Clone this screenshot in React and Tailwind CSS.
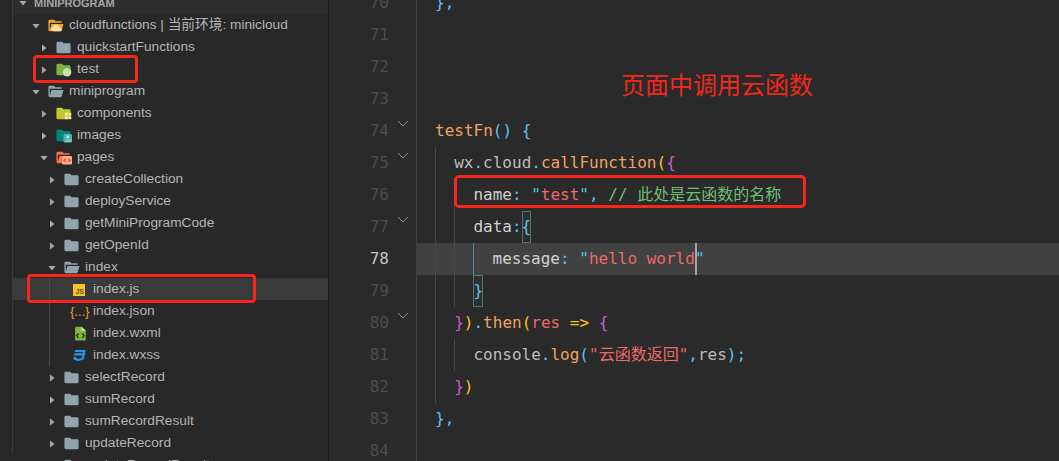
import React from "react";

const FOLDER = "M10 4H4c-1.11 0-2 .89-2 2v12c0 1.097.903 2 2 2h16c1.097 0 2-.903 2-2V8a2 2 0 0 0-2-2h-8l-2-2z";
const FOLDER_OPEN = "M19 20H4c-1.11 0-2-.9-2-2V6c0-1.11.89-2 2-2h6l2 2h7a2 2 0 0 1 2 2H4v10l2.14-8h17.07l-2.28 8.5c-.23.87-1.01 1.5-1.93 1.5z";

function Arrow({ open }) {
  return (
    <svg width="8" height="8" viewBox="0 0 8 8" className="shrink-0 mr-2 text-[#a8a8a8]">
      {open ? <path d="M0.5 2h7L4 6.5z" fill="currentColor" /> : <path d="M2 0.5v7L6.5 4z" fill="currentColor" />}
    </svg>
  );
}

// overlay badge on top of the material folder icons
function Badge({ kind }) {
  if (kind === "cloud") return <path d="M10 20c-2.5 0-4-1.4-4-3.2 0-1.6 1.2-2.8 2.8-3 .7-1.7 2.3-2.8 4.2-2.8 2.3 0 4.2 1.6 4.6 3.7 2 .2 3.4 1.5 3.4 3 0 1.3-1 2.3-2.5 2.3z" fill="#ffe0a8" />;
  if (kind === "test") return <circle cx="17" cy="16" r="6" fill="#c5e1a5" />;
  if (kind === "grid")
    return (
      <g fill="#eef09a">
        <rect x="14" y="11" width="4" height="4" />
        <rect x="19" y="11" width="4" height="4" />
        <rect x="14" y="16" width="4" height="4" />
        <rect x="19" y="16" width="4" height="4" />
      </g>
    );
  if (kind === "image")
    return (
      <g>
        <rect x="12" y="10" width="12" height="12" rx="2" fill="#4db6ac" />
        <circle cx="18" cy="14" r="2" fill="#d7f0ec" />
        <path d="M13 21l4-4 3 2 3-3v5z" fill="#80cbc4" />
      </g>
    );
  if (kind === "code")
    return (
      <g>
        <rect x="10" y="10" width="14" height="12" rx="2" fill="#ffab91" />
        <path d="M15 13.5L12.5 16l2.5 2.5M19 13.5l2.5 2.5-2.5 2.5" stroke="#d84315" strokeWidth="1.5" fill="none" />
      </g>
    );
  return null;
}

function FolderIcon({ color, open, badge }) {
  return (
    <svg width="17" height="17" viewBox="0 0 24 24" className="shrink-0 mr-[5px] -ml-[1px]">
      <path d={open ? FOLDER_OPEN : FOLDER} fill={color} />
      <Badge kind={badge} />
    </svg>
  );
}

function FileIcon({ kind }) {
  if (kind === "js") {
    return (
      <span className="shrink-0 mr-[8px] ml-[1px] w-3 h-3 bg-[#fbc02d] flex items-end justify-end pr-[1px] text-[7px] leading-[8px] font-bold text-[#6b4d00]">
        JS
      </span>
    );
  }
  if (kind === "json") {
    return <span className="shrink-0 w-[15px] mr-[6px] flex justify-center text-[12px] leading-none tracking-[-0.5px] text-[#f9a825]">{"{…}"}</span>;
  }
  if (kind === "wxml") {
    return (
      <svg width="15" height="15" viewBox="0 0 24 24" className="shrink-0 mr-[6px]">
        <path d="M7 1h9l6 6v14a2 2 0 0 1-2 2H7a2 2 0 0 1-2-2V3a2 2 0 0 1 2-2z" fill="#7cb342" />
        <path d="M15 1v7h7z" fill="#c5e1a5" />
        <path d="M10.5 12L7.5 15.5l3 3.5M16.5 12l3 3.5-3 3.5" stroke="#1f2a12" strokeWidth="2" fill="none" />
      </svg>
    );
  }
  return (
    <svg width="15" height="15" viewBox="0 0 24 24" className="shrink-0 mr-[6px]">
      <path d="M5 3l-.65 3.34h13.59L17.5 8.5H3.92l-.66 3.33h13.59l-.76 3.81-5.48 1.81-4.75-1.81.33-1.64H2.85l-.79 4 7.85 3 9.05-3 1.2-6.03.24-1.21L21.94 3H5z" fill="#2196f3" />
    </svg>
  );
}

const PAD = { 1: "pl-[19px]", 2: "pl-[27px]", 3: "pl-[35px]", 4: "pl-[43px]" };

function Row({ depth, name, arrow, color = "#90a4ae", open, badge, file, active, children }) {
  return (
    <div className={"relative flex items-center h-[22px] pt-px whitespace-nowrap text-[13.7px] text-[#b4b4b4] " + PAD[depth] + (active ? " bg-[#3a3a3a]" : "")}>
      {arrow ? <Arrow open={arrow === "open"} /> : <span className="w-2 mr-2 shrink-0" />}
      {file ? <FileIcon kind={file} /> : <FolderIcon color={color} open={open} badge={badge} />}
      <span>{name}</span>
      {children}
    </div>
  );
}

function Sidebar() {
  const folder = (name) => <Row key={name} depth={3} name={name} arrow="closed" />;
  return (
    <div className="w-[329px] h-full shrink-0 overflow-hidden pl-3 bg-[#282828] border-r border-[#1f1f1f]">
      <div className="h-full -mt-2 border-l border-[#3b3b3b]">
        <div className="flex items-center h-[22px] pl-[5px] bg-[#2d2d2d] text-[11px] font-bold text-[#a4a4a4]">
          <svg width="8" height="8" viewBox="0 0 8 8" className="mr-[7px] ml-[1px]"><path d="M0.5 2h7L4 6.5z" fill="#a8a8a8" /></svg>
          MINIPROGRAM
        </div>
        <Row depth={1} name="cloudfunctions | 当前环境: minicloud" arrow="open" color="#f9a825" open badge="cloud" />
        <Row depth={2} name="quickstartFunctions" arrow="closed" />
        <Row depth={2} name="test" arrow="closed" color="#7cb342" badge="test">
          <div className="absolute left-5 top-[-3px] w-[105px] h-[28px] rounded-[4px] border-[3px] border-[#f5271d]" />
        </Row>
        <Row depth={1} name="miniprogram" arrow="open" open />
        <Row depth={2} name="components" arrow="closed" color="#c0ca33" badge="grid" />
        <Row depth={2} name="images" arrow="closed" color="#00897b" badge="image" />
        <Row depth={2} name="pages" arrow="open" color="#ff7043" open badge="code" />
        {["createCollection", "deployService", "getMiniProgramCode", "getOpenId"].map(folder)}
        <Row depth={3} name="index" arrow="open" open />
        <div className="relative">
          <Row depth={4} name="index.js" file="js" active>
            <div className="absolute left-[14px] top-[-4px] w-[229px] h-[29px] z-10 rounded-[4px] border-[3px] border-[#f5271d]" />
          </Row>
          <Row depth={4} name="index.json" file="json" />
          <Row depth={4} name="index.wxml" file="wxml" />
          <Row depth={4} name="index.wxss" file="css" />
          <div className="absolute left-[36px] top-0 bottom-0 w-px bg-[#4a4a4a]" />
        </div>
        {["selectRecord", "sumRecord", "sumRecordResult", "updateRecord", "updateRecordResult"].map(folder)}
      </div>
    </div>
  );
}

// token colours
const G = "text-[#bdbdbd]";
const W = "text-[#d0d0d0]";
const B = "text-[#5cc0ee]";
const O = "text-[#f0a35e]";
const Y = "text-[#f5c518]";
const M = "text-[#c75fc7]";
const R = "text-[#ec6a67]";
const C = "text-[#6dbf71]";

const LINES = [
  { n: 70, fold: false, guides: 0, code: [[B, "},"]] },
  { n: 71, guides: 0, code: [] },
  { n: 72, guides: 0, code: [] },
  { n: 73, guides: 0, code: [] },
  { n: 74, fold: true, guides: 0, code: [[O, "testFn"], [B, "() {"]] },
  { n: 75, fold: true, guides: 1, code: [[G, "wx"], [B, "."], [G, "cloud"], [B, "."], [O, "callFunction"], [Y, "("], [M, "{"]] },
  { n: 76, guides: 2, code: [[W, "name"], [B, ": \""], [R, "test"], [B, "\", "], [C, "// 此处是云函数的名称"]] },
  { n: 77, fold: true, guides: 2, code: [[W, "data"], [B, ":"], [B, "{", true]] },
  { n: 78, guides: 3, active: true, code: [[W, "message"], [B, ": \""], [R, "hello world"], [B, "\""]] },
  { n: 79, guides: 2, code: [[B, "}", true]] },
  { n: 80, fold: true, guides: 1, code: [[M, "}"], [Y, ")"], [B, "."], [O, "then"], [Y, "("], [R, "res"], [Y, " => "], [M, "{"]] },
  { n: 81, guides: 2, code: [[G, "console"], [B, "."], [O, "log"], [B, "("], [R, "\"云函数返回\""], [B, ","], [G, "res"], [B, ");"]] },
  { n: 82, guides: 1, code: [[M, "}"], [Y, ")"]] },
  { n: 83, guides: 0, code: [[B, "},"]] },
  { n: 84, guides: 0, code: [] },
];

function Line({ line }) {
  return (
    <div className={"relative flex h-8 pl-[18px] whitespace-pre text-base leading-8 " + (line.active ? "bg-[#414141]" : "")}>
      {[0, 1, 2].slice(0, line.guides).map((i) => (
        <span key={i} className={"w-[19.2px] shrink-0 border-l " + (i === 2 ? "border-[#55839b]" : "border-[#484848]")} />
      ))}
      <span>
        {line.code.map(([cls, text, box], i) => (
          <span key={i} className={cls + (box ? " inline-block h-8 align-top outline outline-1 -outline-offset-1 outline-[#5f6f6f] bg-[#2a3230]" : "")}>{text}</span>
        ))}
      </span>
      {line.active && <span className="absolute left-[278px] top-0 w-[2px] h-8 bg-[#a8a8a8]" />}
      {line.n === 76 && <div className="absolute left-[37px] top-[-4px] w-[352px] h-[33px] rounded-[5px] border-[3px] border-[#f5271d]" />}
    </div>
  );
}

function Editor() {
  return (
    <div className="relative flex-1 h-full overflow-hidden bg-[#2a2a2a] font-['DejaVu_Sans_Mono','Noto_Sans_CJK_SC',monospace]">
      <div className="flex -mt-[13px]">
        <div className="w-[88px] shrink-0 border-r border-[#424242]">
          {LINES.map((l) => (
            <div key={l.n} className={"relative h-8 pr-[27px] text-right text-base leading-8 " + (l.active ? "text-[#c4c4c4]" : "text-[#4c4c4c]")}>
              {l.n}
              {l.fold && (
                <svg width="12" height="7" viewBox="0 0 12 7" className="absolute right-[7px] top-[5px]">
                  <path d="M1 1l5 5 5-5" stroke="#8c8c8c" strokeWidth="1" fill="none" />
                </svg>
              )}
            </div>
          ))}
        </div>
        <div className="flex-1 min-w-0">
          {LINES.map((l) => <Line key={l.n} line={l} />)}
        </div>
      </div>
      <div className="absolute left-[292px] top-[68px] text-2xl leading-8 text-[#f0291c] font-['Noto_Sans_CJK_SC',sans-serif]">页面中调用云函数</div>
    </div>
  );
}

export default function App() {
  return (
    <div className="flex w-[1059px] h-[461px] overflow-hidden font-['Liberation_Sans','Noto_Sans_CJK_SC',sans-serif]">
      <Sidebar />
      <Editor />
    </div>
  );
}
